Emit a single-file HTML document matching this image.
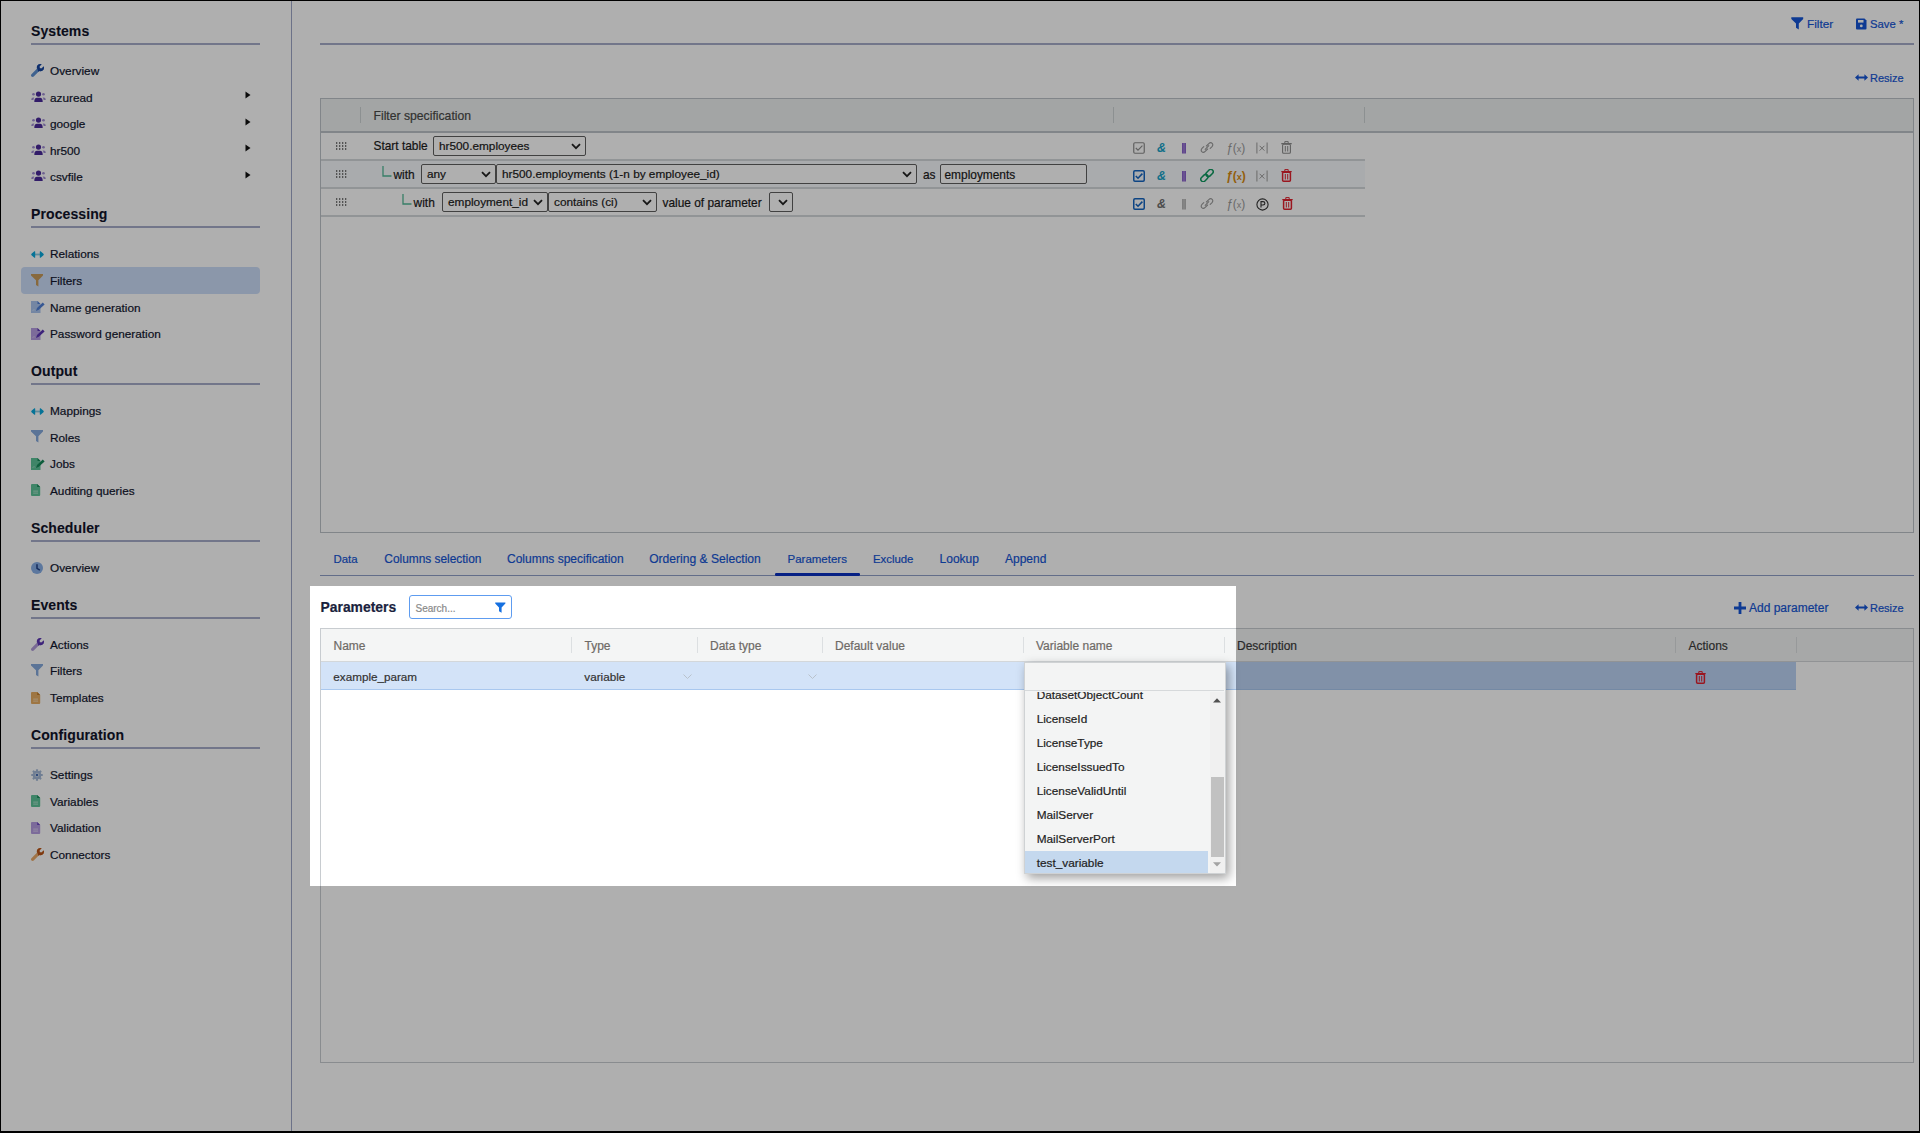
<!DOCTYPE html>
<html><head><meta charset="utf-8"><style>
html,body{margin:0;padding:0;}
body{width:1920px;height:1133px;position:relative;overflow:hidden;background:#fff;font-family:"Liberation Sans", sans-serif;}
.t{position:absolute;white-space:nowrap;line-height:1;-webkit-text-stroke:0.2px currentColor;}
.r{position:absolute;display:block;}
#spot{position:absolute;left:310px;top:586px;width:926px;height:300px;box-shadow:0 0 0 3000px rgba(0,0,0,0.314);z-index:50;pointer-events:none;}
#frame{position:absolute;left:0;top:0;width:1920px;height:1133px;box-sizing:border-box;border-style:solid;border-color:#000;border-width:1px 1px 2px 1px;z-index:60;}
</style></head><body>
<div class="t" style="left:31.00px;top:24.00px;font-size:14px;color:#10132a;font-weight:bold;letter-spacing:0.1px;-webkit-text-stroke:0.1px currentColor">Systems</div>
<div class="r" style="left:31px;top:43px;width:229px;height:2px;background:#a6adc9;"></div>
<div class="r" style="left:21px;top:267px;width:239px;height:27px;background:#cbdcf8;border-radius:4px"></div>
<div class="t" style="left:50.00px;top:66.00px;font-size:11.8px;color:#11162e;font-weight:normal;">Overview</div>
<svg class="r" style="left:31px;top:64px;" width="13" height="13" viewBox="0 0 512 512"><defs><clipPath id="wc1"><path d="M180 0 H520 V340 L300 330 Z"/></clipPath></defs><path d="M507.73 109.1c-2.24-9.03-13.54-12.09-20.12-5.51l-74.36 74.36-67.88-11.31-11.31-67.88 74.36-74.36c6.62-6.62 3.43-17.9-5.66-20.16-47.38-11.74-99.55.91-136.58 37.93-39.64 39.64-50.55 97.1-34.05 147.2L18.74 402.76c-24.99 24.99-24.99 65.51 0 90.5 24.99 24.99 65.51 24.99 90.5 0l213.21-213.21c50.12 16.71 107.47 5.68 147.37-34.22 37.07-37.07 49.7-89.32 37.91-136.73z" fill="#5c8fd0"/><path d="M507.73 109.1c-2.24-9.03-13.54-12.09-20.12-5.51l-74.36 74.36-67.88-11.31-11.31-67.88 74.36-74.36c6.62-6.62 3.43-17.9-5.66-20.16-47.38-11.74-99.55.91-136.58 37.93-39.64 39.64-50.55 97.1-34.05 147.2L18.74 402.76c-24.99 24.99-24.99 65.51 0 90.5 24.99 24.99 65.51 24.99 90.5 0l213.21-213.21c50.12 16.71 107.47 5.68 147.37-34.22 37.07-37.07 49.7-89.32 37.91-136.73z" fill="#17439e" clip-path="url(#wc1)"/></svg>
<div class="t" style="left:50.00px;top:93.00px;font-size:11.8px;color:#11162e;font-weight:normal;">azuread</div>
<svg class="r" style="left:31px;top:91px;" width="15" height="12" viewBox="0 0 15 12"><circle cx="7.5" cy="3.1" r="2.6" fill="#4a2a9a"/><path d="M3.3 11 Q3.3 6.8 6 6.8 H9 Q11.7 6.8 11.7 11Z" fill="#4a2a9a"/><circle cx="2.5" cy="3.3" r="1.3" fill="#a08ed2"/><circle cx="12.5" cy="3.3" r="1.3" fill="#a08ed2"/><path d="M0.2 9 Q0.2 6.6 2.4 6.6 L3.4 6.8 Q2.4 7.8 2.4 9Z" fill="#a08ed2"/><path d="M14.8 9 Q14.8 6.6 12.6 6.6 L11.6 6.8 Q12.6 7.8 12.6 9Z" fill="#a08ed2"/></svg>
<div class="t" style="left:50.00px;top:119.00px;font-size:11.8px;color:#11162e;font-weight:normal;">google</div>
<svg class="r" style="left:31px;top:117px;" width="15" height="12" viewBox="0 0 15 12"><circle cx="7.5" cy="3.1" r="2.6" fill="#4a2a9a"/><path d="M3.3 11 Q3.3 6.8 6 6.8 H9 Q11.7 6.8 11.7 11Z" fill="#4a2a9a"/><circle cx="2.5" cy="3.3" r="1.3" fill="#a08ed2"/><circle cx="12.5" cy="3.3" r="1.3" fill="#a08ed2"/><path d="M0.2 9 Q0.2 6.6 2.4 6.6 L3.4 6.8 Q2.4 7.8 2.4 9Z" fill="#a08ed2"/><path d="M14.8 9 Q14.8 6.6 12.6 6.6 L11.6 6.8 Q12.6 7.8 12.6 9Z" fill="#a08ed2"/></svg>
<div class="t" style="left:50.00px;top:146.00px;font-size:11.8px;color:#11162e;font-weight:normal;">hr500</div>
<svg class="r" style="left:31px;top:144px;" width="15" height="12" viewBox="0 0 15 12"><circle cx="7.5" cy="3.1" r="2.6" fill="#4a2a9a"/><path d="M3.3 11 Q3.3 6.8 6 6.8 H9 Q11.7 6.8 11.7 11Z" fill="#4a2a9a"/><circle cx="2.5" cy="3.3" r="1.3" fill="#a08ed2"/><circle cx="12.5" cy="3.3" r="1.3" fill="#a08ed2"/><path d="M0.2 9 Q0.2 6.6 2.4 6.6 L3.4 6.8 Q2.4 7.8 2.4 9Z" fill="#a08ed2"/><path d="M14.8 9 Q14.8 6.6 12.6 6.6 L11.6 6.8 Q12.6 7.8 12.6 9Z" fill="#a08ed2"/></svg>
<div class="t" style="left:50.00px;top:172.00px;font-size:11.8px;color:#11162e;font-weight:normal;">csvfile</div>
<svg class="r" style="left:31px;top:170px;" width="15" height="12" viewBox="0 0 15 12"><circle cx="7.5" cy="3.1" r="2.6" fill="#4a2a9a"/><path d="M3.3 11 Q3.3 6.8 6 6.8 H9 Q11.7 6.8 11.7 11Z" fill="#4a2a9a"/><circle cx="2.5" cy="3.3" r="1.3" fill="#a08ed2"/><circle cx="12.5" cy="3.3" r="1.3" fill="#a08ed2"/><path d="M0.2 9 Q0.2 6.6 2.4 6.6 L3.4 6.8 Q2.4 7.8 2.4 9Z" fill="#a08ed2"/><path d="M14.8 9 Q14.8 6.6 12.6 6.6 L11.6 6.8 Q12.6 7.8 12.6 9Z" fill="#a08ed2"/></svg>
<svg class="r" style="left:245px;top:91px;" width="6" height="8" viewBox="0 0 6 8"><path d="M0.5 0.5 L5.5 4 L0.5 7.5Z" fill="#111"/></svg>
<svg class="r" style="left:245px;top:118px;" width="6" height="8" viewBox="0 0 6 8"><path d="M0.5 0.5 L5.5 4 L0.5 7.5Z" fill="#111"/></svg>
<svg class="r" style="left:245px;top:144px;" width="6" height="8" viewBox="0 0 6 8"><path d="M0.5 0.5 L5.5 4 L0.5 7.5Z" fill="#111"/></svg>
<svg class="r" style="left:245px;top:171px;" width="6" height="8" viewBox="0 0 6 8"><path d="M0.5 0.5 L5.5 4 L0.5 7.5Z" fill="#111"/></svg>
<div class="t" style="left:31.00px;top:207.00px;font-size:14px;color:#10132a;font-weight:bold;letter-spacing:0.1px;-webkit-text-stroke:0.1px currentColor">Processing</div>
<div class="r" style="left:31px;top:226px;width:229px;height:2px;background:#a6adc9;"></div>
<div class="t" style="left:50.00px;top:249.00px;font-size:11.8px;color:#11162e;font-weight:normal;">Relations</div>
<svg class="r" style="left:31px;top:250.5px;" width="13" height="7" viewBox="0 0 13 7"><rect x="3.5" y="2.6" width="6" height="1.8" fill="#8ccbe0"/><path d="M0.2 3.5 Q0.2 3 0.8 2.5 L3.4 0.3 Q4.2 -0.2 4.2 0.8 V6.2 Q4.2 7.2 3.4 6.7 L0.8 4.5 Q0.2 4 0.2 3.5Z" fill="#0aa8dc"/><path d="M12.8 3.5 Q12.8 3 12.2 2.5 L9.6 0.3 Q8.8 -0.2 8.8 0.8 V6.2 Q8.8 7.2 9.6 6.7 L12.2 4.5 Q12.8 4 12.8 3.5Z" fill="#0aa8dc"/></svg>
<div class="t" style="left:50.00px;top:276.00px;font-size:11.8px;color:#11162e;font-weight:normal;">Filters</div>
<svg class="r" style="left:31px;top:274px;" width="12" height="13" viewBox="0 0 12 13"><path d="M0 0 H12 V1.6 L7.4 6.2 V12.4 L5 11 V6.2 L0 1.6Z" fill="#c69a5a"/></svg>
<div class="t" style="left:50.00px;top:303.00px;font-size:11.8px;color:#11162e;font-weight:normal;">Name generation</div>
<svg class="r" style="left:31px;top:301px;" width="14" height="12" viewBox="0 0 14 12"><path d="M0 0 H6.5 L9.5 3 V12 H0Z" fill="#a9c4ee"/><path d="M6.5 0 V3 H9.5Z" fill="#4f7fd6"/><path d="M5 10 L6 7 L11.8 1.6 L13.6 3.4 L7.8 8.8Z" fill="#4f7fd6"/><path d="M1.5 10 L3 8.5 L4 9.5" stroke="#fff" stroke-opacity="0.5" stroke-width="0.8" fill="none"/></svg>
<div class="t" style="left:50.00px;top:329.00px;font-size:11.8px;color:#11162e;font-weight:normal;">Password generation</div>
<svg class="r" style="left:31px;top:328px;" width="14" height="12" viewBox="0 0 14 12"><path d="M0 0 H6.5 L9.5 3 V12 H0Z" fill="#b59de0"/><path d="M6.5 0 V3 H9.5Z" fill="#5b35b4"/><path d="M5 10 L6 7 L11.8 1.6 L13.6 3.4 L7.8 8.8Z" fill="#5b35b4"/><path d="M1.5 10 L3 8.5 L4 9.5" stroke="#fff" stroke-opacity="0.5" stroke-width="0.8" fill="none"/></svg>
<div class="t" style="left:31.00px;top:364.00px;font-size:14px;color:#10132a;font-weight:bold;letter-spacing:0.1px;-webkit-text-stroke:0.1px currentColor">Output</div>
<div class="r" style="left:31px;top:383px;width:229px;height:2px;background:#a6adc9;"></div>
<div class="t" style="left:50.00px;top:406.00px;font-size:11.8px;color:#11162e;font-weight:normal;">Mappings</div>
<svg class="r" style="left:31px;top:407.5px;" width="13" height="7" viewBox="0 0 13 7"><rect x="3.5" y="2.6" width="6" height="1.8" fill="#8ccbe0"/><path d="M0.2 3.5 Q0.2 3 0.8 2.5 L3.4 0.3 Q4.2 -0.2 4.2 0.8 V6.2 Q4.2 7.2 3.4 6.7 L0.8 4.5 Q0.2 4 0.2 3.5Z" fill="#0aa8dc"/><path d="M12.8 3.5 Q12.8 3 12.2 2.5 L9.6 0.3 Q8.8 -0.2 8.8 0.8 V6.2 Q8.8 7.2 9.6 6.7 L12.2 4.5 Q12.8 4 12.8 3.5Z" fill="#0aa8dc"/></svg>
<div class="t" style="left:50.00px;top:433.00px;font-size:11.8px;color:#11162e;font-weight:normal;">Roles</div>
<svg class="r" style="left:31px;top:430px;" width="12" height="13" viewBox="0 0 12 13"><path d="M0 0 H12 V1.6 L7.4 6.2 V12.4 L5 11 V6.2 L0 1.6Z" fill="#85a9dc"/></svg>
<div class="t" style="left:50.00px;top:459.00px;font-size:11.8px;color:#11162e;font-weight:normal;">Jobs</div>
<svg class="r" style="left:31px;top:458px;" width="14" height="12" viewBox="0 0 14 12"><path d="M0 0 H6.5 L9.5 3 V12 H0Z" fill="#5cc298"/><path d="M6.5 0 V3 H9.5Z" fill="#168a5a"/><path d="M5 10 L6 7 L11.8 1.6 L13.6 3.4 L7.8 8.8Z" fill="#168a5a"/><path d="M1.5 10 L3 8.5 L4 9.5" stroke="#fff" stroke-opacity="0.5" stroke-width="0.8" fill="none"/></svg>
<div class="t" style="left:50.00px;top:486.00px;font-size:11.8px;color:#11162e;font-weight:normal;">Auditing queries</div>
<svg class="r" style="left:31px;top:484px;" width="10" height="12" viewBox="0 0 10 12"><path d="M1 0 H6.2 L9.2 3 V11 Q9.2 12 8.2 12 H1 Q0 12 0 11 V1 Q0 0 1 0Z" fill="#5cc298"/><path d="M6.2 0 V3 H9.2Z" fill="#168a5a"/><rect x="2.2" y="6.6" width="4.8" height="1" fill="#fff" fill-opacity="0.5"/><rect x="2.2" y="8.6" width="4.8" height="1" fill="#fff" fill-opacity="0.5"/></svg>
<div class="t" style="left:31.00px;top:521.00px;font-size:14px;color:#10132a;font-weight:bold;letter-spacing:0.1px;-webkit-text-stroke:0.1px currentColor">Scheduler</div>
<div class="r" style="left:31px;top:540px;width:229px;height:2px;background:#a6adc9;"></div>
<div class="t" style="left:50.00px;top:563.00px;font-size:11.8px;color:#11162e;font-weight:normal;">Overview</div>
<svg class="r" style="left:31px;top:562px;" width="12" height="12" viewBox="0 0 12 12"><circle cx="6" cy="6" r="6" fill="#86aee6"/><path d="M6 2.8 V6.4 L8.4 7.8" stroke="#1f3f86" stroke-width="1.5" fill="none" stroke-linecap="round"/></svg>
<div class="t" style="left:31.00px;top:598.00px;font-size:14px;color:#10132a;font-weight:bold;letter-spacing:0.1px;-webkit-text-stroke:0.1px currentColor">Events</div>
<div class="r" style="left:31px;top:617px;width:229px;height:2px;background:#a6adc9;"></div>
<div class="t" style="left:50.00px;top:640.00px;font-size:11.8px;color:#11162e;font-weight:normal;">Actions</div>
<svg class="r" style="left:31px;top:638px;" width="13" height="13" viewBox="0 0 512 512"><defs><clipPath id="wc2"><path d="M180 0 H520 V340 L300 330 Z"/></clipPath></defs><path d="M507.73 109.1c-2.24-9.03-13.54-12.09-20.12-5.51l-74.36 74.36-67.88-11.31-11.31-67.88 74.36-74.36c6.62-6.62 3.43-17.9-5.66-20.16-47.38-11.74-99.55.91-136.58 37.93-39.64 39.64-50.55 97.1-34.05 147.2L18.74 402.76c-24.99 24.99-24.99 65.51 0 90.5 24.99 24.99 65.51 24.99 90.5 0l213.21-213.21c50.12 16.71 107.47 5.68 147.37-34.22 37.07-37.07 49.7-89.32 37.91-136.73z" fill="#b09ad8"/><path d="M507.73 109.1c-2.24-9.03-13.54-12.09-20.12-5.51l-74.36 74.36-67.88-11.31-11.31-67.88 74.36-74.36c6.62-6.62 3.43-17.9-5.66-20.16-47.38-11.74-99.55.91-136.58 37.93-39.64 39.64-50.55 97.1-34.05 147.2L18.74 402.76c-24.99 24.99-24.99 65.51 0 90.5 24.99 24.99 65.51 24.99 90.5 0l213.21-213.21c50.12 16.71 107.47 5.68 147.37-34.22 37.07-37.07 49.7-89.32 37.91-136.73z" fill="#5b35b4" clip-path="url(#wc2)"/></svg>
<div class="t" style="left:50.00px;top:666.00px;font-size:11.8px;color:#11162e;font-weight:normal;">Filters</div>
<svg class="r" style="left:31px;top:664px;" width="12" height="13" viewBox="0 0 12 13"><path d="M0 0 H12 V1.6 L7.4 6.2 V12.4 L5 11 V6.2 L0 1.6Z" fill="#85a9dc"/></svg>
<div class="t" style="left:50.00px;top:693.00px;font-size:11.8px;color:#11162e;font-weight:normal;">Templates</div>
<svg class="r" style="left:31px;top:692px;" width="10" height="12" viewBox="0 0 10 12"><path d="M1 0 H6.2 L9.2 3 V11 Q9.2 12 8.2 12 H1 Q0 12 0 11 V1 Q0 0 1 0Z" fill="#e6ac62"/><path d="M6.2 0 V3 H9.2Z" fill="#c07a2a"/><rect x="2.2" y="6.6" width="4.8" height="1" fill="#fff" fill-opacity="0.5"/><rect x="2.2" y="8.6" width="4.8" height="1" fill="#fff" fill-opacity="0.5"/></svg>
<div class="t" style="left:31.00px;top:728.00px;font-size:14px;color:#10132a;font-weight:bold;letter-spacing:0.1px;-webkit-text-stroke:0.1px currentColor">Configuration</div>
<div class="r" style="left:31px;top:747px;width:229px;height:2px;background:#a6adc9;"></div>
<div class="t" style="left:50.00px;top:770.00px;font-size:11.8px;color:#11162e;font-weight:normal;">Settings</div>
<svg class="r" style="left:31px;top:769px;" width="12" height="12" viewBox="0 0 12 12"><g fill="#a3b8d6"><circle cx="6" cy="6" r="4.3"/><rect x="4.9" y="0.2" width="2.2" height="11.6" rx="0.6" transform="rotate(0 6 6)"/><rect x="4.9" y="0.2" width="2.2" height="11.6" rx="0.6" transform="rotate(45 6 6)"/><rect x="4.9" y="0.2" width="2.2" height="11.6" rx="0.6" transform="rotate(90 6 6)"/><rect x="4.9" y="0.2" width="2.2" height="11.6" rx="0.6" transform="rotate(135 6 6)"/></g><circle cx="6" cy="6" r="2.2" fill="#fff" fill-opacity="0.35"/><circle cx="6" cy="6" r="1.1" fill="#2a56a8"/></svg>
<div class="t" style="left:50.00px;top:797.00px;font-size:11.8px;color:#11162e;font-weight:normal;">Variables</div>
<svg class="r" style="left:31px;top:795px;" width="10" height="12" viewBox="0 0 10 12"><path d="M1 0 H6.2 L9.2 3 V11 Q9.2 12 8.2 12 H1 Q0 12 0 11 V1 Q0 0 1 0Z" fill="#5cc298"/><path d="M6.2 0 V3 H9.2Z" fill="#168a5a"/><rect x="2.2" y="6.6" width="4.8" height="1" fill="#fff" fill-opacity="0.5"/><rect x="2.2" y="8.6" width="4.8" height="1" fill="#fff" fill-opacity="0.5"/></svg>
<div class="t" style="left:50.00px;top:823.00px;font-size:11.8px;color:#11162e;font-weight:normal;">Validation</div>
<svg class="r" style="left:31px;top:822px;" width="10" height="12" viewBox="0 0 10 12"><path d="M1 0 H6.2 L9.2 3 V11 Q9.2 12 8.2 12 H1 Q0 12 0 11 V1 Q0 0 1 0Z" fill="#b59de0"/><path d="M6.2 0 V3 H9.2Z" fill="#6a45c0"/><rect x="2.2" y="6.6" width="4.8" height="1" fill="#fff" fill-opacity="0.5"/><rect x="2.2" y="8.6" width="4.8" height="1" fill="#fff" fill-opacity="0.5"/></svg>
<div class="t" style="left:50.00px;top:850.00px;font-size:11.8px;color:#11162e;font-weight:normal;">Connectors</div>
<svg class="r" style="left:31px;top:848px;" width="13" height="13" viewBox="0 0 512 512"><defs><clipPath id="wc3"><path d="M180 0 H520 V340 L300 330 Z"/></clipPath></defs><path d="M507.73 109.1c-2.24-9.03-13.54-12.09-20.12-5.51l-74.36 74.36-67.88-11.31-11.31-67.88 74.36-74.36c6.62-6.62 3.43-17.9-5.66-20.16-47.38-11.74-99.55.91-136.58 37.93-39.64 39.64-50.55 97.1-34.05 147.2L18.74 402.76c-24.99 24.99-24.99 65.51 0 90.5 24.99 24.99 65.51 24.99 90.5 0l213.21-213.21c50.12 16.71 107.47 5.68 147.37-34.22 37.07-37.07 49.7-89.32 37.91-136.73z" fill="#eaaa6a"/><path d="M507.73 109.1c-2.24-9.03-13.54-12.09-20.12-5.51l-74.36 74.36-67.88-11.31-11.31-67.88 74.36-74.36c6.62-6.62 3.43-17.9-5.66-20.16-47.38-11.74-99.55.91-136.58 37.93-39.64 39.64-50.55 97.1-34.05 147.2L18.74 402.76c-24.99 24.99-24.99 65.51 0 90.5 24.99 24.99 65.51 24.99 90.5 0l213.21-213.21c50.12 16.71 107.47 5.68 147.37-34.22 37.07-37.07 49.7-89.32 37.91-136.73z" fill="#b8541a" clip-path="url(#wc3)"/></svg>
<div class="r" style="left:291px;top:0px;width:1px;height:1133px;background:#9ea6c6;"></div>
<svg class="r" style="left:1791px;top:17px;" width="13" height="13" viewBox="0 0 13 13"><path d="M0.3 0.3 H12.2 V2 L7.8 6.4 V12.6 L5 10.8 V6.4 L0.3 2Z" fill="#1555d6"/></svg>
<div class="t" style="left:1807.00px;top:19.00px;font-size:11.8px;color:#1555d6;font-weight:normal;">Filter</div>
<svg class="r" style="left:1856px;top:17.5px;" width="11" height="12" viewBox="0 0 11 12"><path d="M1 0.5 H8.5 L10.5 2.5 V10.5 Q10.5 11.5 9.5 11.5 H1 Q0 11.5 0 10.5 V1.5 Q0 0.5 1 0.5Z" fill="#1555d6"/><rect x="2" y="2" width="5.5" height="2.6" fill="#fff"/><circle cx="5.3" cy="7.9" r="1.4" fill="#fff"/></svg>
<div class="t" style="left:1870.00px;top:19.00px;font-size:11.3px;color:#1555d6;font-weight:normal;">Save *</div>
<div class="r" style="left:320px;top:43px;width:1594px;height:2px;background:#a6adc9;"></div>
<svg class="r" style="left:1855px;top:74px;" width="13" height="7" viewBox="0 0 13 7"><path d="M0 3.5 L3.6 0.3 V2.6 H9.4 V0.3 L13 3.5 L9.4 6.7 V4.4 H3.6 V6.7Z" fill="#1555d6"/></svg>
<div class="t" style="left:1870.00px;top:73.00px;font-size:11px;color:#1555d6;font-weight:normal;">Resize</div>
<div class="r" style="left:320px;top:98px;width:1594px;height:435px;box-sizing:border-box;border:1px solid #bcc2c8;"></div>
<div class="r" style="left:321px;top:99px;width:1592px;height:32px;background:#eef1f1;"></div>
<div class="r" style="left:321px;top:131px;width:1592px;height:2px;background:#bcc2c8;"></div>
<div class="r" style="left:360px;top:107px;width:1px;height:16px;background:#cdd2d4;"></div>
<div class="r" style="left:1113px;top:107px;width:1px;height:16px;background:#cdd2d4;"></div>
<div class="r" style="left:1364px;top:107px;width:1px;height:16px;background:#cdd2d4;"></div>
<div class="t" style="left:373.50px;top:110.00px;font-size:12.2px;color:#4a4a48;font-weight:normal;">Filter specification</div>
<div class="r" style="left:321px;top:160px;width:1591px;height:1px;background:#ffffff;"></div>
<div class="r" style="left:321px;top:161px;width:1044px;height:27px;background:#f7f9fc;"></div>
<div class="r" style="left:321px;top:159px;width:1044px;height:2px;background:#d4d8db;"></div>
<div class="r" style="left:321px;top:187px;width:1044px;height:2px;background:#d4d8db;"></div>
<div class="r" style="left:321px;top:215px;width:1044px;height:2px;background:#d4d8db;"></div>
<svg class="r" style="left:336px;top:142px;" width="11" height="8" viewBox="0 0 11 8"><rect x="0" y="0" width="1.3" height="2" fill="#7a7a7a"/><rect x="0" y="3" width="1.3" height="2" fill="#7a7a7a"/><rect x="0" y="6" width="1.3" height="2" fill="#7a7a7a"/><rect x="3" y="0" width="1.3" height="2" fill="#7a7a7a"/><rect x="3" y="3" width="1.3" height="2" fill="#7a7a7a"/><rect x="3" y="6" width="1.3" height="2" fill="#7a7a7a"/><rect x="6" y="0" width="1.3" height="2" fill="#7a7a7a"/><rect x="6" y="3" width="1.3" height="2" fill="#7a7a7a"/><rect x="6" y="6" width="1.3" height="2" fill="#7a7a7a"/><rect x="9" y="0" width="1.3" height="2" fill="#7a7a7a"/><rect x="9" y="3" width="1.3" height="2" fill="#7a7a7a"/><rect x="9" y="6" width="1.3" height="2" fill="#7a7a7a"/></svg>
<svg class="r" style="left:336px;top:170px;" width="11" height="8" viewBox="0 0 11 8"><rect x="0" y="0" width="1.3" height="2" fill="#7a7a7a"/><rect x="0" y="3" width="1.3" height="2" fill="#7a7a7a"/><rect x="0" y="6" width="1.3" height="2" fill="#7a7a7a"/><rect x="3" y="0" width="1.3" height="2" fill="#7a7a7a"/><rect x="3" y="3" width="1.3" height="2" fill="#7a7a7a"/><rect x="3" y="6" width="1.3" height="2" fill="#7a7a7a"/><rect x="6" y="0" width="1.3" height="2" fill="#7a7a7a"/><rect x="6" y="3" width="1.3" height="2" fill="#7a7a7a"/><rect x="6" y="6" width="1.3" height="2" fill="#7a7a7a"/><rect x="9" y="0" width="1.3" height="2" fill="#7a7a7a"/><rect x="9" y="3" width="1.3" height="2" fill="#7a7a7a"/><rect x="9" y="6" width="1.3" height="2" fill="#7a7a7a"/></svg>
<svg class="r" style="left:336px;top:198px;" width="11" height="8" viewBox="0 0 11 8"><rect x="0" y="0" width="1.3" height="2" fill="#7a7a7a"/><rect x="0" y="3" width="1.3" height="2" fill="#7a7a7a"/><rect x="0" y="6" width="1.3" height="2" fill="#7a7a7a"/><rect x="3" y="0" width="1.3" height="2" fill="#7a7a7a"/><rect x="3" y="3" width="1.3" height="2" fill="#7a7a7a"/><rect x="3" y="6" width="1.3" height="2" fill="#7a7a7a"/><rect x="6" y="0" width="1.3" height="2" fill="#7a7a7a"/><rect x="6" y="3" width="1.3" height="2" fill="#7a7a7a"/><rect x="6" y="6" width="1.3" height="2" fill="#7a7a7a"/><rect x="9" y="0" width="1.3" height="2" fill="#7a7a7a"/><rect x="9" y="3" width="1.3" height="2" fill="#7a7a7a"/><rect x="9" y="6" width="1.3" height="2" fill="#7a7a7a"/></svg>
<div class="t" style="left:373.50px;top:141.00px;font-size:11.9px;color:#1b1b1b;font-weight:normal;">Start table</div>
<div class="r" style="left:433px;top:136px;width:153px;height:20px;box-sizing:border-box;border:1px solid #5f5f5f;border-radius:2px;background:#fff;"></div>
<div class="t" style="left:439.00px;top:141.00px;font-size:11.8px;color:#1b1b1b;font-weight:normal;">hr500.employees</div>
<svg class="r" style="left:571px;top:142.5px;" width="10" height="7" viewBox="0 0 10 7"><path d="M1 1.2 L5 5.2 L9 1.2" stroke="#222" stroke-width="1.8" fill="none"/></svg>
<svg class="r" style="left:382px;top:166px;" width="10" height="11" viewBox="0 0 10 11"><path d="M1 0 V10 H9.5" stroke="#52b896" stroke-width="1.3" fill="none"/></svg>
<div class="t" style="left:393.50px;top:170.00px;font-size:11.9px;color:#1b1b1b;font-weight:normal;">with</div>
<div class="r" style="left:421px;top:164px;width:75px;height:20px;box-sizing:border-box;border:1px solid #5f5f5f;border-radius:2px;background:#fff;"></div>
<div class="t" style="left:427.00px;top:169.00px;font-size:11.8px;color:#1b1b1b;font-weight:normal;">any</div>
<svg class="r" style="left:481px;top:170.5px;" width="10" height="7" viewBox="0 0 10 7"><path d="M1 1.2 L5 5.2 L9 1.2" stroke="#222" stroke-width="1.8" fill="none"/></svg>
<div class="r" style="left:496px;top:164px;width:421px;height:20px;box-sizing:border-box;border:1px solid #5f5f5f;border-radius:2px;background:#fff;"></div>
<div class="t" style="left:502.00px;top:169.00px;font-size:11.8px;color:#1b1b1b;font-weight:normal;">hr500.employments (1-n by employee_id)</div>
<svg class="r" style="left:902px;top:170.5px;" width="10" height="7" viewBox="0 0 10 7"><path d="M1 1.2 L5 5.2 L9 1.2" stroke="#222" stroke-width="1.8" fill="none"/></svg>
<div class="t" style="left:923.00px;top:170.00px;font-size:11.9px;color:#1b1b1b;font-weight:normal;">as</div>
<div class="r" style="left:940px;top:164px;width:147px;height:20px;box-sizing:border-box;border:1px solid #5f5f5f;border-radius:2px;background:#fff;"></div>
<div class="t" style="left:944.50px;top:170.00px;font-size:11.9px;color:#1b1b1b;font-weight:normal;">employments</div>
<svg class="r" style="left:402px;top:194px;" width="10" height="11" viewBox="0 0 10 11"><path d="M1 0 V10 H9.5" stroke="#52b896" stroke-width="1.3" fill="none"/></svg>
<div class="t" style="left:413.60px;top:198.00px;font-size:11.9px;color:#1b1b1b;font-weight:normal;">with</div>
<div class="r" style="left:442px;top:192px;width:106px;height:20px;box-sizing:border-box;border:1px solid #5f5f5f;border-radius:2px;background:#fff;"></div>
<div class="t" style="left:448.00px;top:197.00px;font-size:11.8px;color:#1b1b1b;font-weight:normal;">employment_id</div>
<svg class="r" style="left:533px;top:198.5px;" width="10" height="7" viewBox="0 0 10 7"><path d="M1 1.2 L5 5.2 L9 1.2" stroke="#222" stroke-width="1.8" fill="none"/></svg>
<div class="r" style="left:548px;top:192px;width:109px;height:20px;box-sizing:border-box;border:1px solid #5f5f5f;border-radius:2px;background:#fff;"></div>
<div class="t" style="left:554.00px;top:197.00px;font-size:11.8px;color:#1b1b1b;font-weight:normal;">contains (ci)</div>
<svg class="r" style="left:642px;top:198.5px;" width="10" height="7" viewBox="0 0 10 7"><path d="M1 1.2 L5 5.2 L9 1.2" stroke="#222" stroke-width="1.8" fill="none"/></svg>
<div class="t" style="left:662.50px;top:198.00px;font-size:11.9px;color:#1b1b1b;font-weight:normal;">value of parameter</div>
<div class="r" style="left:769px;top:192px;width:24px;height:20px;box-sizing:border-box;border:1px solid #5f5f5f;border-radius:2px;background:#fff;"></div>
<svg class="r" style="left:778px;top:198.5px;" width="10" height="7" viewBox="0 0 10 7"><path d="M1 1.2 L5 5.2 L9 1.2" stroke="#222" stroke-width="1.8" fill="none"/></svg>
<svg class="r" style="left:1133px;top:142px;" width="12" height="12" viewBox="0 0 12 12"><rect x="0.75" y="0.75" width="10.5" height="10.5" rx="1.2" stroke="#8c8c8c" stroke-width="1.2" fill="none"/><path d="M2.8 6 L5 8.2 L9.4 3.6" stroke="#8c8c8c" stroke-width="1.1" fill="none"/></svg>
<div class="t" style="left:1157px;top:142px;font-size:12.5px;font-weight:bold;font-style:italic;color:#1aa3c8;-webkit-text-stroke:0;">&amp;</div>
<svg class="r" style="left:1182px;top:143px;" width="5" height="11" viewBox="0 0 5 11"><rect x="0" y="0" width="4" height="10.5" fill="#8b63cc"/><rect x="1.7" y="0" width="0.6" height="10.5" fill="#fff" fill-opacity="0.45"/></svg>
<svg class="r" style="left:1200px;top:141px;" width="14" height="13" viewBox="0 0 14 13"><g stroke="#9a9a9a" stroke-width="1.1" fill="none" stroke-linecap="round"><path d="M6.4 5 L8.8 2.6 Q10.6 0.8 12.2 2.3 Q13.6 3.9 11.8 5.8 L10.2 7.4"/><path d="M7.6 8 L5.2 10.4 Q3.4 12.2 1.8 10.7 Q0.4 9.1 2.2 7.2 L3.8 5.6"/><path d="M5.2 8.4 L8.8 4.6"/></g></svg>
<div class="t" style="left:1226px;top:141.5px;font-size:12px;color:#9a9a9a;font-weight:normal;-webkit-text-stroke:0;"><i>ƒ</i>(<span style="font-size:9px">x</span>)</div>
<svg class="r" style="left:1256px;top:142px;" width="12" height="12" viewBox="0 0 12 12"><rect x="0.4" y="0.5" width="1" height="11" fill="#9a9a9a"/><rect x="10.6" y="0.5" width="1" height="11" fill="#9a9a9a"/><path d="M3.6 3.8 L8.4 8.6 M8.4 3.8 L3.6 8.6" stroke="#9a9a9a" stroke-width="1"/></svg>
<svg class="r" style="left:1281px;top:141px;" width="11" height="13" viewBox="0 0 11 13"><rect x="1.6" y="3.2" width="7.8" height="9" rx="1" stroke="#8c8c8c" stroke-width="1.1" fill="none"/><rect x="0.3" y="2" width="10.4" height="1.3" fill="#8c8c8c"/><path d="M3.8 2 V0.6 H7.2 V2" stroke="#8c8c8c" stroke-width="1" fill="none"/><rect x="3.8" y="5" width="1" height="5.5" fill="#8c8c8c"/><rect x="6.2" y="5" width="1" height="5.5" fill="#8c8c8c"/></svg>
<svg class="r" style="left:1133px;top:170px;" width="12" height="12" viewBox="0 0 12 12"><rect x="0.75" y="0.75" width="10.5" height="10.5" rx="1.2" stroke="#1565c0" stroke-width="1.5" fill="none"/><path d="M2.8 6 L5 8.2 L9.4 3.6" stroke="#1565c0" stroke-width="1.6" fill="none"/></svg>
<div class="t" style="left:1157px;top:170px;font-size:12.5px;font-weight:bold;font-style:italic;color:#1aa3c8;-webkit-text-stroke:0;">&amp;</div>
<svg class="r" style="left:1182px;top:171px;" width="5" height="11" viewBox="0 0 5 11"><rect x="0" y="0" width="4" height="10.5" fill="#8b63cc"/><rect x="1.7" y="0" width="0.6" height="10.5" fill="#fff" fill-opacity="0.45"/></svg>
<svg class="r" style="left:1200px;top:169px;" width="14" height="13" viewBox="0 0 14 13"><g transform="rotate(45 7 6.5)" stroke="#0f9960" stroke-width="1.5" fill="none"><rect x="4.6" y="-1.2" width="4.8" height="8.2" rx="2.4"/><rect x="4.6" y="6" width="4.8" height="8.2" rx="2.4"/></g></svg>
<div class="t" style="left:1226px;top:169.5px;font-size:12px;color:#d68a10;font-weight:bold;-webkit-text-stroke:0;"><i>ƒ</i>(<span style="font-size:9px">x</span>)</div>
<svg class="r" style="left:1256px;top:170px;" width="12" height="12" viewBox="0 0 12 12"><rect x="0.4" y="0.5" width="1" height="11" fill="#9a9a9a"/><rect x="10.6" y="0.5" width="1" height="11" fill="#9a9a9a"/><path d="M3.6 3.8 L8.4 8.6 M8.4 3.8 L3.6 8.6" stroke="#9a9a9a" stroke-width="1"/></svg>
<svg class="r" style="left:1281px;top:169px;" width="11" height="13" viewBox="0 0 11 13"><rect x="1.6" y="3.2" width="7.8" height="9" rx="1" stroke="#e0202e" stroke-width="1.5" fill="none"/><rect x="0.3" y="2" width="10.4" height="1.3" fill="#e0202e"/><path d="M3.8 2 V0.6 H7.2 V2" stroke="#e0202e" stroke-width="1" fill="none"/><rect x="3.8" y="5" width="1" height="5.5" fill="#e0202e"/><rect x="6.2" y="5" width="1" height="5.5" fill="#e0202e"/></svg>
<svg class="r" style="left:1133px;top:198px;" width="12" height="12" viewBox="0 0 12 12"><rect x="0.75" y="0.75" width="10.5" height="10.5" rx="1.2" stroke="#1565c0" stroke-width="1.5" fill="none"/><path d="M2.8 6 L5 8.2 L9.4 3.6" stroke="#1565c0" stroke-width="1.6" fill="none"/></svg>
<div class="t" style="left:1157px;top:198px;font-size:12.5px;font-weight:bold;font-style:italic;color:#707070;-webkit-text-stroke:0;">&amp;</div>
<svg class="r" style="left:1182px;top:199px;" width="5" height="11" viewBox="0 0 5 11"><rect x="0" y="0" width="4" height="10.5" fill="#b8b8b8"/><rect x="1.7" y="0" width="0.6" height="10.5" fill="#fff" fill-opacity="0.45"/></svg>
<svg class="r" style="left:1200px;top:197px;" width="14" height="13" viewBox="0 0 14 13"><g stroke="#9a9a9a" stroke-width="1.1" fill="none" stroke-linecap="round"><path d="M6.4 5 L8.8 2.6 Q10.6 0.8 12.2 2.3 Q13.6 3.9 11.8 5.8 L10.2 7.4"/><path d="M7.6 8 L5.2 10.4 Q3.4 12.2 1.8 10.7 Q0.4 9.1 2.2 7.2 L3.8 5.6"/><path d="M5.2 8.4 L8.8 4.6"/></g></svg>
<div class="t" style="left:1226px;top:197.5px;font-size:12px;color:#9a9a9a;font-weight:normal;-webkit-text-stroke:0;"><i>ƒ</i>(<span style="font-size:9px">x</span>)</div>
<svg class="r" style="left:1256px;top:197.5px;" width="13" height="13" viewBox="0 0 13 13"><circle cx="6.5" cy="6.5" r="5.6" stroke="#333" stroke-width="1.1" fill="none"/><path d="M5 9.6 V3.6 H7 Q8.9 3.6 8.9 5.3 Q8.9 7 7 7 H5" stroke="#333" stroke-width="1.1" fill="none"/></svg>
<svg class="r" style="left:1282px;top:197px;" width="11" height="13" viewBox="0 0 11 13"><rect x="1.6" y="3.2" width="7.8" height="9" rx="1" stroke="#e0202e" stroke-width="1.5" fill="none"/><rect x="0.3" y="2" width="10.4" height="1.3" fill="#e0202e"/><path d="M3.8 2 V0.6 H7.2 V2" stroke="#e0202e" stroke-width="1" fill="none"/><rect x="3.8" y="5" width="1" height="5.5" fill="#e0202e"/><rect x="6.2" y="5" width="1" height="5.5" fill="#e0202e"/></svg>
<div class="t" style="left:333.50px;top:554.00px;font-size:11.4px;color:#1555d6;font-weight:normal;">Data</div>
<div class="t" style="left:384.30px;top:554.00px;font-size:11.9px;color:#1555d6;font-weight:normal;">Columns selection</div>
<div class="t" style="left:507.00px;top:553.00px;font-size:12px;color:#1555d6;font-weight:normal;">Columns specification</div>
<div class="t" style="left:649.20px;top:553.00px;font-size:12.1px;color:#1555d6;font-weight:normal;">Ordering &amp; Selection</div>
<div class="t" style="left:787.50px;top:554.00px;font-size:11.5px;color:#1555d6;font-weight:normal;">Parameters</div>
<div class="t" style="left:872.90px;top:554.00px;font-size:11.4px;color:#1555d6;font-weight:normal;">Exclude</div>
<div class="t" style="left:939.60px;top:553.00px;font-size:12px;color:#1555d6;font-weight:normal;">Lookup</div>
<div class="t" style="left:1005.00px;top:553.00px;font-size:12px;color:#1555d6;font-weight:normal;">Append</div>
<div class="r" style="left:320px;top:575px;width:1594px;height:1px;background:#8f9fc8;"></div>
<div class="r" style="left:774.5px;top:573.2px;width:85px;height:2.6px;background:#0a2fc0;border-radius:1.3px"></div>
<div class="t" style="left:320.50px;top:601.00px;font-size:13.9px;color:#1a1f3d;font-weight:bold;">Parameters</div>
<div class="r" style="left:409px;top:595px;width:103px;height:23.5px;box-sizing:border-box;border:1.5px solid #5e9cf0;border-radius:3px;background:#fff;"></div>
<div class="t" style="left:415.50px;top:604.00px;font-size:10px;color:#8a8a8a;font-weight:normal;">Search...</div>
<svg class="r" style="left:494.5px;top:601.5px;" width="11" height="11" viewBox="0 0 11 11"><path d="M0.2 0.6 H10.4 V1.4 L6.6 5.4 V10.8 L4 9.2 V5.4 L0.2 1.4Z" fill="#1670e0"/></svg>
<svg class="r" style="left:1734px;top:601.5px;" width="12" height="12" viewBox="0 0 12 12"><path d="M4.6 0 H7.4 V4.6 H12 V7.4 H7.4 V12 H4.6 V7.4 H0 V4.6 H4.6Z" fill="#1555d6"/></svg>
<div class="t" style="left:1749.00px;top:602.00px;font-size:12px;color:#1555d6;font-weight:normal;">Add parameter</div>
<svg class="r" style="left:1855px;top:604px;" width="13" height="7" viewBox="0 0 13 7"><path d="M0 3.5 L3.6 0.3 V2.6 H9.4 V0.3 L13 3.5 L9.4 6.7 V4.4 H3.6 V6.7Z" fill="#1555d6"/></svg>
<div class="t" style="left:1870.00px;top:603.00px;font-size:11px;color:#1555d6;font-weight:normal;">Resize</div>
<div class="r" style="left:320px;top:628px;width:1594px;height:435px;box-sizing:border-box;border:1px solid #c8ccd0;"></div>
<div class="r" style="left:321px;top:629px;width:1592px;height:32px;background:#f4f5f5;"></div>
<div class="r" style="left:321px;top:661px;width:1592px;height:1px;background:#d3d7da;"></div>
<div class="r" style="left:571px;top:637px;width:1px;height:16px;background:#dcdfe1;"></div>
<div class="r" style="left:697px;top:637px;width:1px;height:16px;background:#dcdfe1;"></div>
<div class="r" style="left:822px;top:637px;width:1px;height:16px;background:#dcdfe1;"></div>
<div class="r" style="left:1023px;top:637px;width:1px;height:16px;background:#dcdfe1;"></div>
<div class="r" style="left:1224px;top:637px;width:1px;height:16px;background:#dcdfe1;"></div>
<div class="r" style="left:1675px;top:637px;width:1px;height:16px;background:#dcdfe1;"></div>
<div class="r" style="left:1796px;top:637px;width:1px;height:16px;background:#dcdfe1;"></div>
<div class="t" style="left:333.50px;top:640.00px;font-size:12px;color:#6e6a66;font-weight:normal;">Name</div>
<div class="t" style="left:584.50px;top:640.00px;font-size:12px;color:#6e6a66;font-weight:normal;">Type</div>
<div class="t" style="left:710.00px;top:640.00px;font-size:12px;color:#6e6a66;font-weight:normal;">Data type</div>
<div class="t" style="left:835.00px;top:640.00px;font-size:12px;color:#6e6a66;font-weight:normal;">Default value</div>
<div class="t" style="left:1036.00px;top:640.00px;font-size:12px;color:#6e6a66;font-weight:normal;">Variable name</div>
<div class="t" style="left:1237.00px;top:640.00px;font-size:12px;color:#3c3c3c;font-weight:normal;">Description</div>
<div class="t" style="left:1688.50px;top:640.00px;font-size:12px;color:#3c3c3c;font-weight:normal;">Actions</div>
<div class="r" style="left:321px;top:662px;width:1475px;height:27px;background:#d3e3f8;"></div>
<div class="r" style="left:1236px;top:662px;width:560px;height:27px;background:#bcd3f5;"></div>
<div class="r" style="left:321px;top:689px;width:1475px;height:1px;background:#a9c8ef;"></div>
<div class="t" style="left:333.30px;top:671.00px;font-size:11.7px;color:#333;font-weight:normal;">example_param</div>
<div class="t" style="left:584.30px;top:671.00px;font-size:11.7px;color:#333;font-weight:normal;">variable</div>
<svg class="r" style="left:683px;top:674px;" width="9" height="6" viewBox="0 0 9 6"><path d="M0.5 0.5 L4.5 4.5 L8.5 0.5" stroke="#b9c2cc" stroke-width="1" fill="none"/></svg>
<svg class="r" style="left:808px;top:674px;" width="9" height="6" viewBox="0 0 9 6"><path d="M0.5 0.5 L4.5 4.5 L8.5 0.5" stroke="#b9c2cc" stroke-width="1" fill="none"/></svg>
<svg class="r" style="left:1695px;top:671px;" width="11" height="13" viewBox="0 0 11 13"><rect x="1.6" y="3.2" width="7.8" height="9" rx="1" stroke="#e0202e" stroke-width="1.5" fill="none"/><rect x="0.3" y="2" width="10.4" height="1.3" fill="#e0202e"/><path d="M3.8 2 V0.6 H7.2 V2" stroke="#e0202e" stroke-width="1" fill="none"/><rect x="3.8" y="5" width="1" height="5.5" fill="#e0202e"/><rect x="6.2" y="5" width="1" height="5.5" fill="#e0202e"/></svg>
<div class="r" style="left:1024px;top:662px;width:201.5px;height:212px;box-sizing:border-box;border:1px solid #cfd2d4;background:#f3f4f4;box-shadow:3px 4px 10px rgba(0,0,0,0.38);overflow:hidden;z-index:5;"><div style="position:absolute;left:0;top:27px;width:199px;height:1px;background:#d6d9db"></div></div>
<div class="r" style="left:1025px;top:692px;width:184.5px;height:181px;overflow:hidden;z-index:6;">
<div class="t" style="left:11.7px;top:-2px;font-size:11.8px;color:#222;">DatasetObjectCount</div>
<div class="t" style="left:11.7px;top:22px;font-size:11.8px;color:#222;">LicenseId</div>
<div class="t" style="left:11.7px;top:46px;font-size:11.8px;color:#222;">LicenseType</div>
<div class="t" style="left:11.7px;top:70px;font-size:11.8px;color:#222;">LicenseIssuedTo</div>
<div class="t" style="left:11.7px;top:94px;font-size:11.8px;color:#222;">LicenseValidUntil</div>
<div class="t" style="left:11.7px;top:118px;font-size:11.8px;color:#222;">MailServer</div>
<div class="t" style="left:11.7px;top:142px;font-size:11.8px;color:#222;">MailServerPort</div>
<div class="r" style="left:0;top:158.5px;width:183px;height:23px;background:#c4d8ee"></div>
<div class="t" style="left:11.7px;top:166px;font-size:11.8px;color:#222;">test_variable</div>
</div>
<div class="r" style="left:1209.5px;top:692px;width:15px;height:181px;background:#f0f0f0;z-index:6"></div>
<div class="r" style="left:1210.5px;top:777px;width:13.5px;height:80px;background:#c1c1c1;z-index:7"></div>
<svg class="r" style="left:1213px;top:698px;z-index:7" width="8" height="5" viewBox="0 0 8 5"><path d="M0 4.5 L4 0.3 L8 4.5Z" fill="#505050"/></svg>
<svg class="r" style="left:1213px;top:862px;z-index:7" width="8" height="5" viewBox="0 0 8 5"><path d="M0 0.3 L4 4.5 L8 0.3Z" fill="#a3a3a3"/></svg>
<div id="spot"></div>
<div id="frame"></div>
</body></html>
